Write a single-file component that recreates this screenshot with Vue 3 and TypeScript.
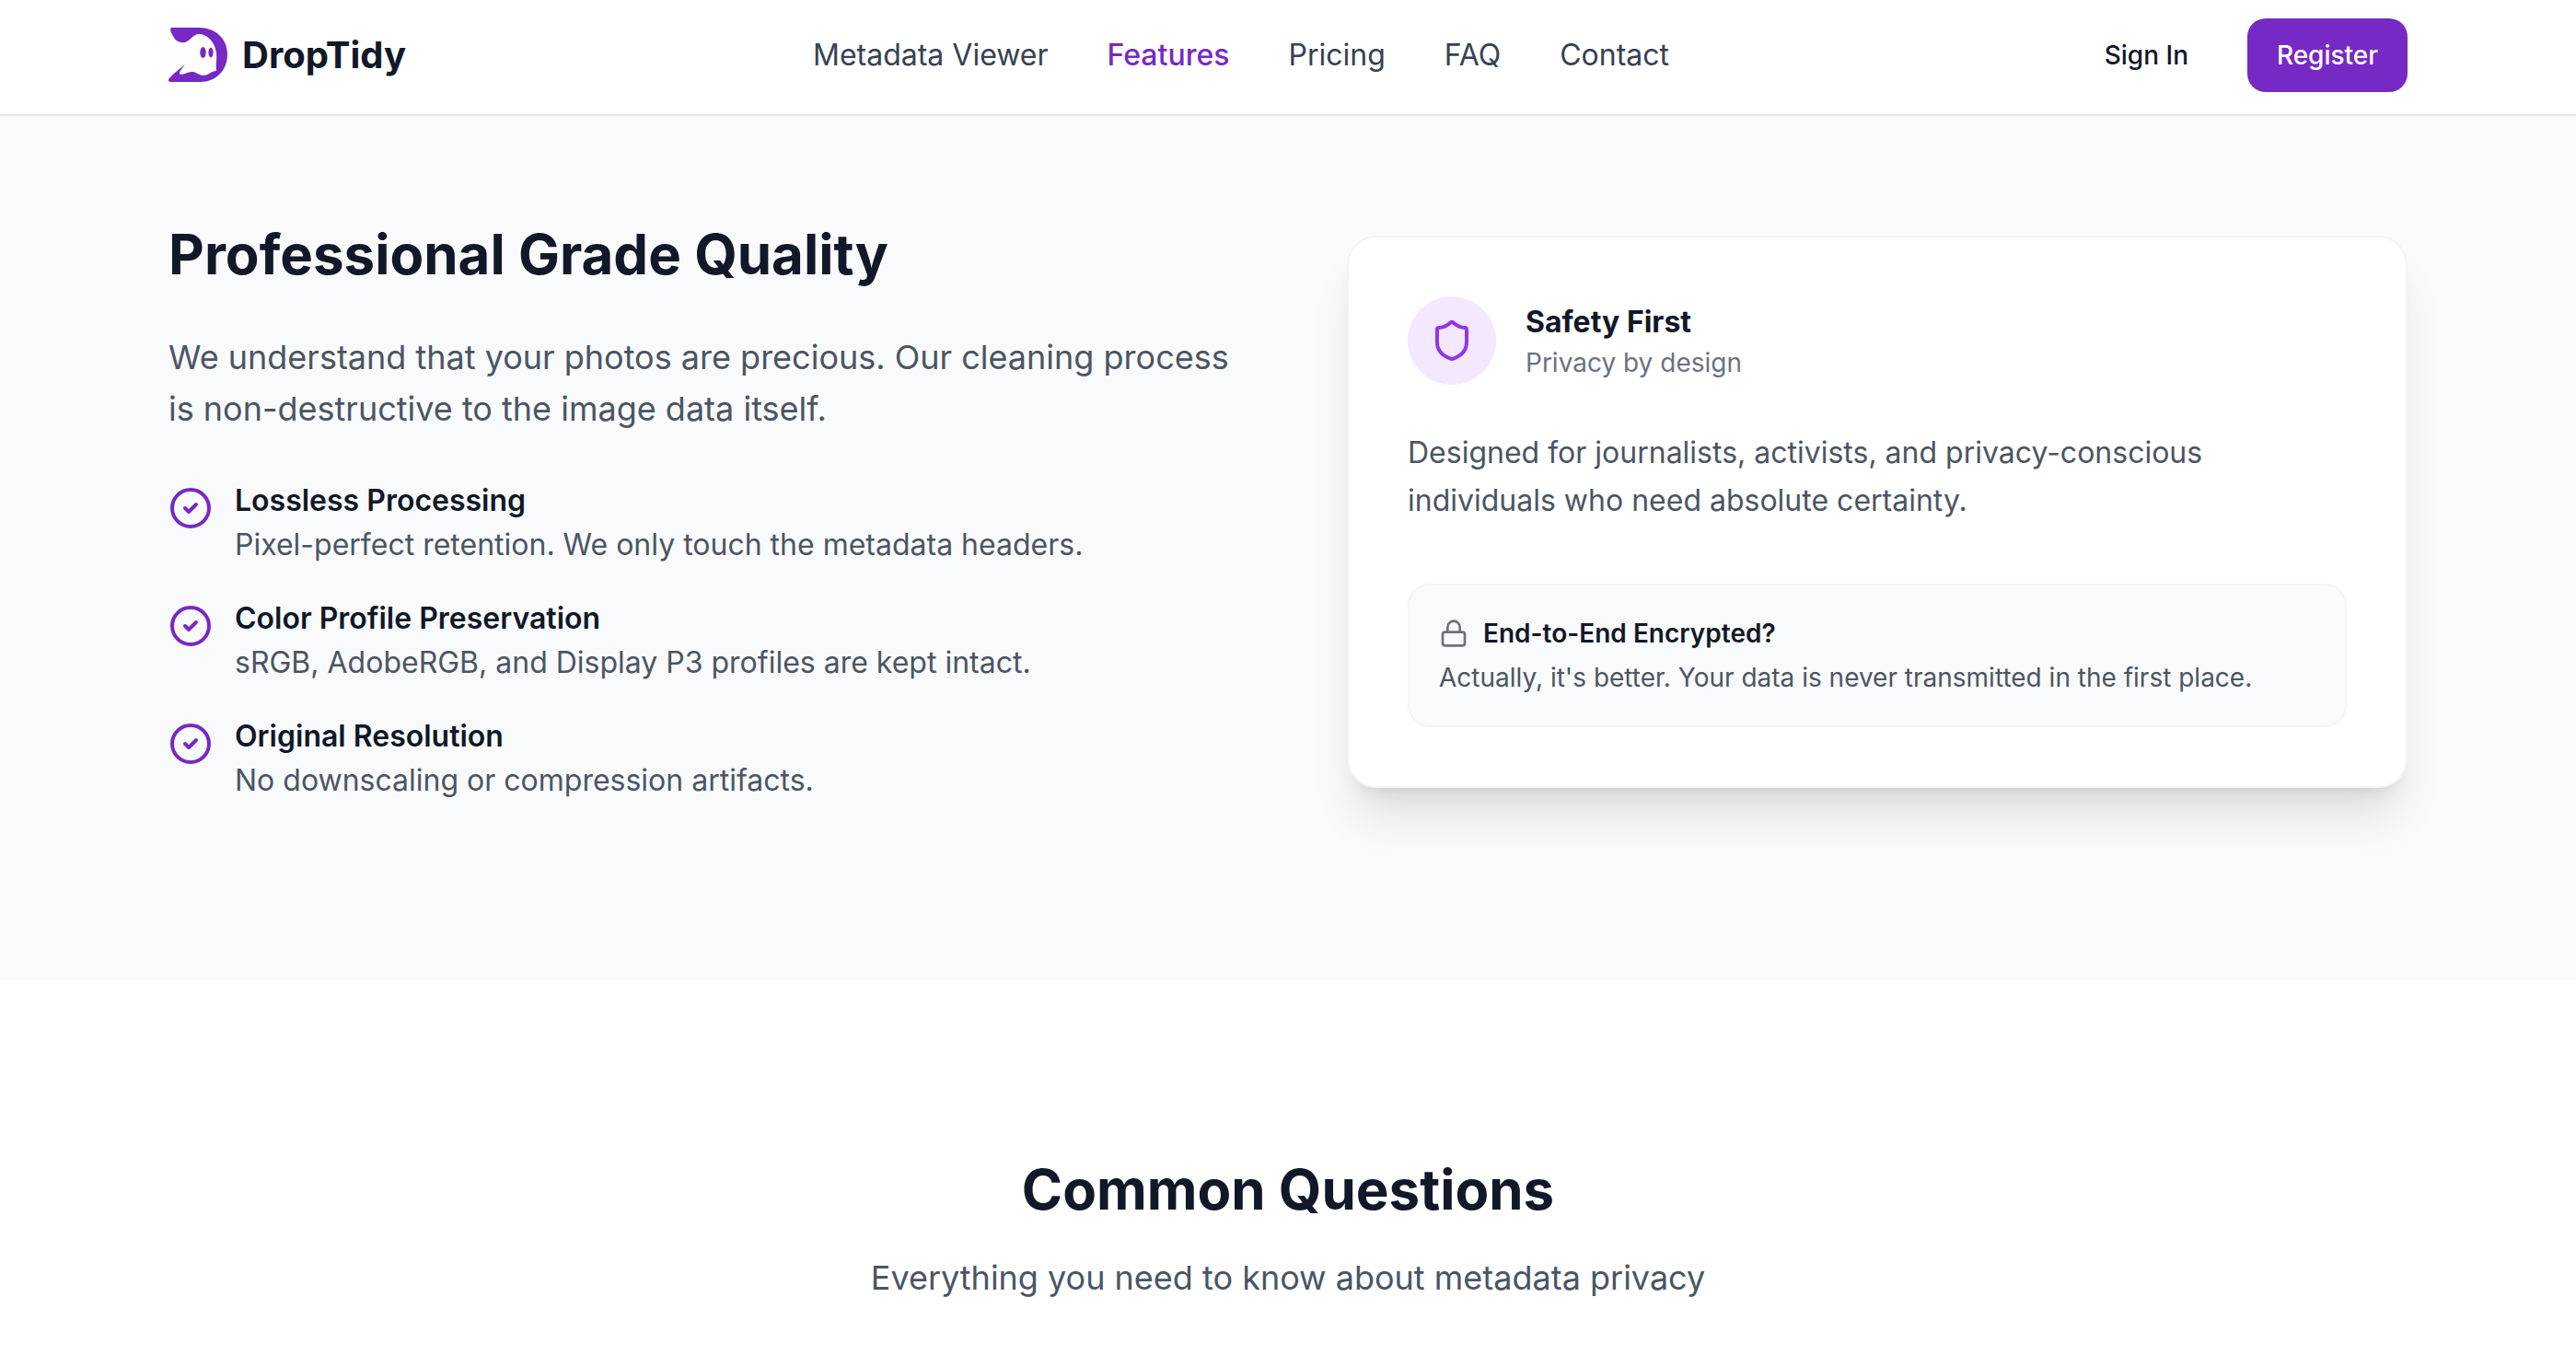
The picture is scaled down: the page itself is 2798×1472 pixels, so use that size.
<template>
  <div class="page">
    <header class="nav">
      <div class="container nav-row">
        <a class="brand">
          <svg class="brand-mark" viewBox="0 0 64 60">
            <path d="M3 0H33C51 0 64 12 64 29C64 47 51 59 35 59H3C0 59-1 57 1 55C6 49 12 45 18 40C15 44 12 47 12 50C14 53 21 47 27 48C31 49 34 52 38 52C43 52 47 47 52 47C51 40 53 33 52 27C50 15 42 7 33 7C27 7 24 14 18 16C12 17 7 14 5 9C3 6 1 2 3 0Z" />
            <ellipse cx="37.5" cy="27" rx="3.2" ry="6" />
            <ellipse cx="46" cy="27" rx="2.6" ry="5.4" />
          </svg>
          <span class="brand-name">DropTidy</span>
        </a>
        <nav class="links">
          <a v-for="link in links" :key="link" class="link" :class="{ active: link === 'Features' }">{{ link }}</a>
        </nav>
        <div class="auth">
          <a class="sign-in">Sign In</a>
          <a class="register">Register</a>
        </div>
      </div>
    </header>

    <section class="quality">
      <div class="container quality-grid">
        <div>
          <h2 class="quality-title">Professional Grade Quality</h2>
          <p class="quality-lead">We understand that your photos are precious. Our cleaning process is non-destructive to the image data itself.</p>
          <ul class="checks">
            <li v-for="item in checks" :key="item.title" class="check">
              <svg class="check-icon" viewBox="0 0 24 24" fill="none" stroke="currentColor" stroke-width="2" stroke-linecap="round" stroke-linejoin="round">
                <circle cx="12" cy="12" r="10" />
                <path d="m9 12 2 2 4-4" />
              </svg>
              <div>
                <div class="check-title">{{ item.title }}</div>
                <div class="check-text">{{ item.text }}</div>
              </div>
            </li>
          </ul>
        </div>

        <div class="card">
          <div class="card-head">
            <div class="shield">
              <svg viewBox="0 0 24 24" fill="none" stroke="currentColor" stroke-width="2" stroke-linecap="round" stroke-linejoin="round">
                <path d="M20 13c0 5-3.5 7.5-7.66 8.95a1 1 0 0 1-.67-.01C7.5 20.5 4 18 4 13V6a1 1 0 0 1 1-1c2 0 4.5-1.2 6.24-2.72a1.17 1.17 0 0 1 1.52 0C14.51 3.81 17 5 19 5a1 1 0 0 1 1 1z" />
              </svg>
            </div>
            <div>
              <div class="card-title">Safety First</div>
              <div class="card-sub">Privacy by design</div>
            </div>
          </div>
          <p class="card-text">Designed for journalists, activists, and privacy-conscious individuals who need absolute certainty.</p>
          <div class="note">
            <div class="note-head">
              <svg class="lock" viewBox="0 0 24 24" fill="none" stroke="currentColor" stroke-width="2" stroke-linecap="round" stroke-linejoin="round">
                <rect x="3" y="11" width="18" height="11" rx="2" ry="2" />
                <path d="M7 11V7a5 5 0 0 1 10 0v4" />
              </svg>
              <span>End-to-End Encrypted?</span>
            </div>
            <p class="note-text">Actually, it's better. Your data is never transmitted in the first place.</p>
          </div>
        </div>
      </div>
    </section>

    <section class="faq">
      <h2 class="faq-title">Common Questions</h2>
      <p class="faq-sub">Everything you need to know about metadata privacy</p>
    </section>
  </div>
</template>

<script setup lang="ts">
const links: string[] = ['Metadata Viewer', 'Features', 'Pricing', 'FAQ', 'Contact'];

const checks: { title: string; text: string }[] = [
  { title: 'Lossless Processing', text: 'Pixel-perfect retention. We only touch the metadata headers.' },
  { title: 'Color Profile Preservation', text: 'sRGB, AdobeRGB, and Display P3 profiles are kept intact.' },
  { title: 'Original Resolution', text: 'No downscaling or compression artifacts.' },
];
</script>

<style>
html, body { background: #fff; }
</style>

<style scoped>
.page { font-family: 'Inter', sans-serif; color: #111827; min-height: 1472px; background: #fff; }
.container { width: 2432px; margin: 0 auto; }

.nav { height: 126px; background: #fff; border-bottom: 2px solid #e5e7eb; box-sizing: border-box; }
.nav-row { height: 120px; display: flex; align-items: center; }
.brand { display: flex; align-items: center; gap: 16px; width: 264px; flex-shrink: 0; }
.brand-mark { width: 64px; height: 60px; fill: #7629c5; flex-shrink: 0; overflow: visible; }
.brand-name { font-size: 40px; font-weight: 700; line-height: 56px; }
.links { display: flex; gap: 64px; margin-left: 436px; }
.link { font-size: 32px; font-weight: 400; line-height: 48px; color: #374151; }
.link.active { color: #7629c5; font-weight: 500; }
.auth { display: flex; align-items: center; gap: 64px; margin-left: auto; }
.sign-in { font-size: 28px; font-weight: 500; line-height: 40px; color: #111827; }
.register { width: 174px; height: 80px; display: flex; align-items: center; justify-content: center; border-radius: 20px; background: #7629c5; color: #fff; font-size: 28px; font-weight: 500; }

.quality { background: #f9fafb; padding: 114px 0 192px; }
.quality-grid { display: grid; grid-template-columns: 1152px 1152px; column-gap: 128px; align-items: center; }
.quality-title { margin: 0 0 48px; font-size: 60px; line-height: 72px; font-weight: 700; color: #111827; }
.quality-lead { margin: 0 0 48px; font-size: 36px; line-height: 56px; color: #4b5563; }
.checks { list-style: none; margin: 0; padding: 0; display: flex; flex-direction: column; gap: 32px; }
.check { display: flex; gap: 24px; }
.check-icon { width: 48px; height: 48px; margin-top: 8px; flex-shrink: 0; color: #7629c5; }
.check-title { font-size: 32px; line-height: 48px; font-weight: 600; color: #111827; }
.check-text { font-size: 32px; line-height: 48px; color: #4b5563; }

.card { box-sizing: border-box; background: #fff; border: 2px solid #f3f4f6; border-radius: 32px; padding: 64px; box-shadow: 0 40px 50px -10px rgba(0, 0, 0, 0.1), 0 16px 20px -12px rgba(0, 0, 0, 0.1); }
.card-head { display: flex; align-items: center; gap: 32px; margin-bottom: 48px; }
.shield { width: 96px; height: 96px; border-radius: 50%; background: #f3e8ff; color: #9333ea; display: flex; align-items: center; justify-content: center; flex-shrink: 0; }
.shield svg { width: 48px; height: 48px; }
.card-title { font-size: 32px; line-height: 48px; font-weight: 700; color: #111827; }
.card-sub { font-size: 28px; line-height: 40px; color: #6b7280; }
.card-text { margin: 0 0 64px; font-size: 32px; line-height: 52px; color: #4b5563; }
.note { background: #f9fafb; border: 2px solid #f3f4f6; border-radius: 24px; padding: 32px; }
.note-head { display: flex; align-items: center; gap: 16px; margin-bottom: 8px; font-size: 28px; line-height: 40px; font-weight: 600; color: #111827; }
.lock { width: 32px; height: 32px; color: #6b7280; flex-shrink: 0; }
.note-text { margin: 0; font-size: 28px; line-height: 40px; color: #4b5563; }

.faq { padding: 192px 0 0; text-align: center; }
.faq-title { margin: 0 0 32px; font-size: 60px; line-height: 72px; font-weight: 700; color: #111827; }
.faq-sub { margin: 0; font-size: 36px; line-height: 56px; color: #4b5563; }
</style>
